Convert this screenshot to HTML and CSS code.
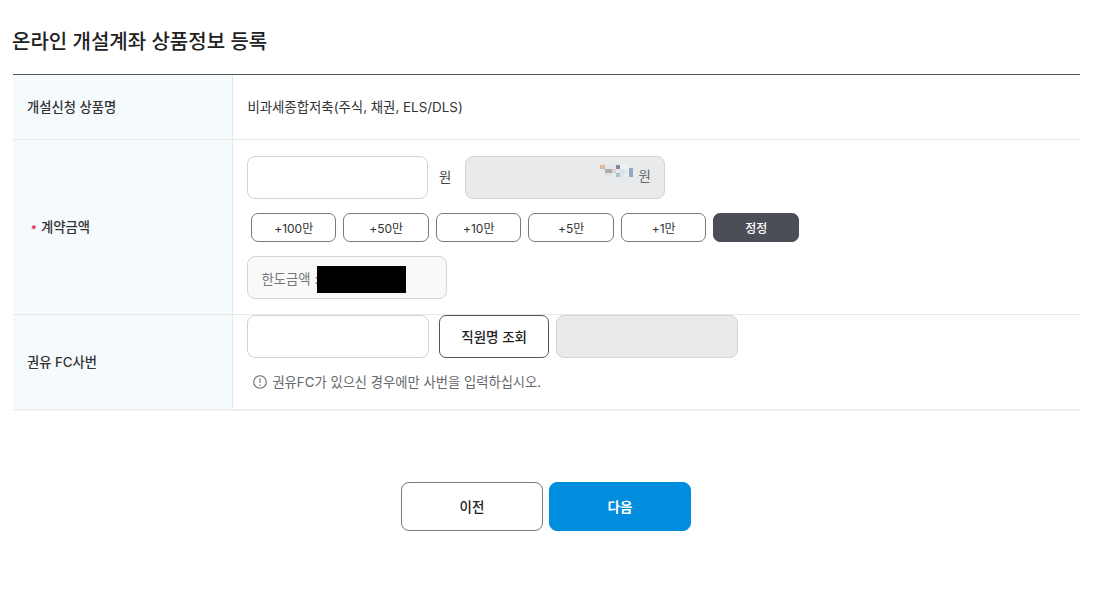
FILE: index.html
```html
<!DOCTYPE html>
<html lang="ko">
<head>
    <meta charset="UTF-8">
    <meta name="viewport" content="width=device-width, initial-scale=1.0">
    <title>온라인 개설계좌 상품정보 등록</title>
    <link rel="stylesheet" href="styles.css">
</head>
<body>
    <div class="container">
        <h1 class="page-title">온라인 개설계좌 상품정보 등록</h1>
        <div class="form-table">
            <div class="form-row row-product">
                <div class="row-label">개설신청 상품명</div>
                <div class="row-value">비과세종합저축(주식, 채권, ELS/DLS)</div>
            </div>
            <div class="form-row row-amount">
                <div class="row-label required"><span class="star">*</span>계약금액</div>
                <div class="row-value">
                    <div class="input-line">
                        <input type="text" class="text-input amount-input">
                        <span class="unit">원</span>
                        <div class="readonly-box amount-box">
                            <svg class="blur-digits" width="34" height="13" viewBox="0 0 34 13">
                                <rect x="0" y="0" width="5" height="4" fill="#dcb89c"/>
                                <rect x="5" y="0" width="11" height="4" fill="#dfe8ea"/>
                                <rect x="16" y="0" width="4" height="4" fill="#8d8298"/>
                                <rect x="20" y="0" width="9" height="4" fill="#eef1f3"/>
                                <rect x="5" y="4" width="7" height="4" fill="#a9aeb2"/>
                                <rect x="12" y="4" width="4" height="4" fill="#d8d3cd"/>
                                <rect x="16" y="4" width="4" height="4" fill="#e4e6e8"/>
                                <rect x="20" y="4" width="5" height="4" fill="#d6e2ea"/>
                                <rect x="5" y="8" width="7" height="4" fill="#dfe3e5"/>
                                <rect x="16" y="8" width="4" height="4" fill="#a8c2d0"/>
                                <rect x="20" y="8" width="4" height="4" fill="#dde3e8"/>
                                <rect x="29" y="3" width="4" height="9" fill="#8fa9c6"/>
                            </svg>
                            <span class="box-unit">원</span>
                        </div>
                    </div>
                    <div class="quick-buttons">
                        <button class="quick-btn">+100만</button>
                        <button class="quick-btn">+50만</button>
                        <button class="quick-btn">+10만</button>
                        <button class="quick-btn">+5만</button>
                        <button class="quick-btn">+1만</button>
                        <button class="quick-btn dark">정정</button>
                    </div>
                    <div class="limit-box">한도금액 :<span class="redacted"></span></div>
                </div>
            </div>
            <div class="form-row row-fc">
                <div class="row-label">권유 FC사번</div>
                <div class="row-value">
                    <div class="input-line">
                        <input type="text" class="text-input fc-input">
                        <button class="lookup-btn">직원명 조회</button>
                        <div class="readonly-box name-box"></div>
                    </div>
                    <p class="notice">
                        <svg width="14" height="14" viewBox="0 0 14 14" fill="none" stroke="#66676b" stroke-width="1.1">
                            <circle cx="7" cy="7" r="6.3"/>
                            <path d="M7 3.4v4.6M7 9.4v1.3"/>
                        </svg>
                        권유FC가 있으신 경우에만 사번을 입력하십시오.
                    </p>
                </div>
            </div>
        </div>
        <div class="page-buttons">
            <button class="page-btn">이전</button>
            <button class="page-btn primary">다음</button>
        </div>
    </div>
</body>
</html>
```

FILE: styles.css
```css
* {
    box-sizing: border-box;
}

body {
    margin: 0;
    background: #fff;
    color: #222;
    font-family: "Inter", "Noto Sans CJK KR", "Noto Sans", sans-serif;
    font-size: 13.4px;
}

button, input {
    font-family: inherit;
    margin: 0;
}

.container {
    width: 1067px;
    margin-left: 13px;
}

.page-title {
    margin: 0;
    height: 74px;
    padding-top: 28px;
    margin-left: -1px;
    font-size: 20px;
    line-height: 28px;
    font-weight: 500;
    color: #222;
}

.form-table {
    border-top: 1px solid #55565c;
}

.form-row {
    display: flex;
    border-bottom: 1px solid #e6e8ea;
}

.row-product {
    height: 65px;
}

.row-amount {
    height: 175px;
}

.row-fc {
    height: 96px;
    border-bottom-width: 2px;
    border-bottom-color: #eeeff0;
}

.row-label {
    width: 220px;
    flex-shrink: 0;
    display: flex;
    align-items: center;
    padding: 0 0 2px 14px;
    background: #f5fafd;
    border-right: 1px solid #e4e9ec;
    font-size: 13.3px;
    font-weight: 500;
    color: #333;
}

.required {
    padding-left: 18px;
}

.star {
    width: 10px;
    padding-top: 5px;
    color: #e0002a;
    font-size: 11px;
}

.row-value {
    flex: 1;
    padding-left: 14.4px;
}

.row-product .row-value {
    display: flex;
    align-items: center;
    padding-bottom: 2px;
    color: #333;
}

.row-amount .row-value {
    padding-top: 16px;
}

.input-line {
    display: flex;
    align-items: center;
}

.text-input {
    height: 43px;
    background: #fff;
    border: 1px solid #d2d3d8;
    border-radius: 8px;
    outline: none;
}

.amount-input {
    width: 180.5px;
}

.unit {
    width: 37px;
    padding: 0 0 3px 11px;
    color: #444;
}

.readonly-box {
    height: 43px;
    background: #e9eaec;
    border: 1px solid #d4d5d8;
    border-radius: 8px;
}

.amount-box {
    width: 200px;
    display: flex;
    justify-content: flex-end;
    padding-right: 13px;
    position: relative;
}

.blur-digits {
    position: absolute;
    left: 134px;
    top: 8px;
}

.box-unit {
    line-height: 38px;
    color: #66676b;
}

.name-box {
    width: 182px;
    margin-left: 7px;
}

.quick-buttons {
    display: flex;
    gap: 7px;
    margin: 14px 0 14px 3.6px;
}

.quick-btn {
    width: 85.5px;
    height: 29px;
    padding: 0 0 1px;
    background: #fff;
    border: 1px solid #77787e;
    border-radius: 7px;
    font-size: 12px;
    color: #333;
}

.dark {
    background: #4b4d57;
    border-color: #4b4d57;
    color: #fff;
    font-weight: 500;
}

.limit-box {
    width: 200px;
    height: 43px;
    display: flex;
    align-items: center;
    padding-left: 13px;
    background: #f9f9f9;
    border: 1px solid #d4d5d8;
    border-radius: 8px;
    color: #77787c;
}

.redacted {
    width: 89px;
    height: 27px;
    margin: 4px 0 0 -1px;
    background: #000;
}

.fc-input {
    width: 181.5px;
}

.lookup-btn {
    width: 109.5px;
    height: 43px;
    margin-left: 10.5px;
    padding: 0 0 2px;
    background: #fff;
    border: 1px solid #55565c;
    border-radius: 7px;
    font-size: 13.5px;
    font-weight: 500;
    color: #222;
}

.notice {
    display: flex;
    align-items: center;
    gap: 5px;
    margin: 14px 0 0 6px;
    font-size: 13.3px;
    line-height: 20px;
    color: #66676b;
}

.page-buttons {
    display: flex;
    justify-content: flex-start;
    gap: 6px;
    margin: 71px 0 0 388px;
}

.page-btn {
    width: 142px;
    height: 49px;
    padding: 0 0 2px;
    background: #fff;
    border: 1px solid #77787e;
    border-radius: 8px;
    font-size: 13.5px;
    font-weight: 500;
    color: #222;
}

.primary {
    background: #008ddd;
    border-color: #008ddd;
    color: #fff;
    font-weight: 700;
}
```
